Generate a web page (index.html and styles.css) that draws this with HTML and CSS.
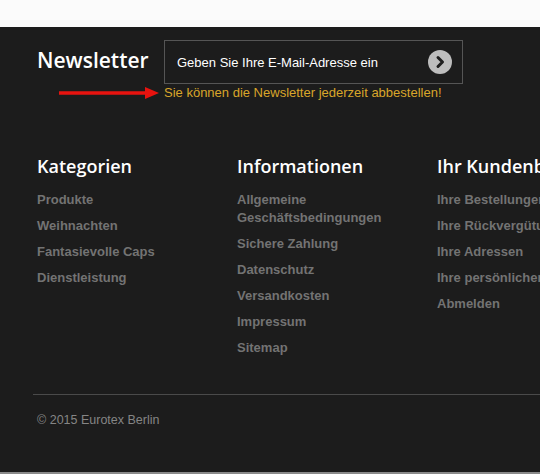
FILE: index.html
```html
<!DOCTYPE html>
<html lang="de">
<head>
<meta charset="utf-8">
<title>Footer</title>
<link rel="stylesheet" href="styles.css">
</head>
<body>
<div class="topband"></div>
<footer class="footer">
  <section class="newsletter">
    <h2 class="nl-title">Newsletter</h2>
    <div class="nl-form">
      <div class="nl-input">
        <span class="nl-placeholder">Geben Sie Ihre E-Mail-Adresse ein</span>
        <span class="nl-btn">
          <svg width="24" height="24" viewBox="0 0 24 24"><circle cx="12" cy="12" r="12" fill="#bdbdbd"/><path d="M10 7.5 L14.5 12 L10 16.5" fill="none" stroke="#1e1e1e" stroke-width="3" stroke-linecap="round" stroke-linejoin="round"/></svg>
        </span>
      </div>
      <p class="nl-note">Sie können die Newsletter jederzeit abbestellen!</p>
    </div>
    <svg class="annot-arrow" width="102" height="14" viewBox="0 0 102 14"><line x1="0" y1="7" x2="88" y2="7" stroke="#e8130f" stroke-width="3.5"/><polygon points="86,1 100,7 86,13" fill="#e8130f"/></svg>
  </section>

  <section class="columns">
    <div class="col">
      <h3 class="col-title">Kategorien</h3>
      <ul class="links">
        <li>Produkte</li>
        <li>Weihnachten</li>
        <li>Fantasievolle Caps</li>
        <li>Dienstleistung</li>
      </ul>
    </div>
    <div class="col">
      <h3 class="col-title">Informationen</h3>
      <ul class="links">
        <li>Allgemeine Geschäftsbedingungen</li>
        <li>Sichere Zahlung</li>
        <li>Datenschutz</li>
        <li>Versandkosten</li>
        <li>Impressum</li>
        <li>Sitemap</li>
      </ul>
    </div>
    <div class="col">
      <h3 class="col-title">Ihr Kundenbereich</h3>
      <ul class="links">
        <li>Ihre Bestellungen</li>
        <li>Ihre Rückvergütungen</li>
        <li>Ihre Adressen</li>
        <li>Ihre persönlichen Daten</li>
        <li>Abmelden</li>
      </ul>
    </div>
  </section>

  <div class="bottom">
    <p class="copy">© 2015 Eurotex Berlin</p>
  </div>
</footer>
<div class="bottomstrip"></div>
</body>
</html>
```

FILE: styles.css
```css
html, body {
  margin: 0;
  padding: 0;
  width: 540px;
  height: 474px;
  overflow: hidden;
  background: #1c1c1c;
  font-family: "Liberation Sans", Arial, sans-serif;
}
.topband {
  height: 27px;
  background: #fbfbfb;
}
.footer {
  height: 445px;
  background: #1c1c1c;
  padding-left: 37px;
  box-sizing: border-box;
  width: 720px;
}
.newsletter {
  position: relative;
  display: flex;
  align-items: flex-start;
  padding-top: 13px;
}
.nl-title {
  margin: 0;
  width: 127px;
  font-family: "Open Sans", sans-serif;
  font-weight: 600;
  font-size: 21px;
  line-height: 40px;
  color: #ffffff;
}
.nl-form {
  display: flex;
  flex-direction: column;
}
.nl-input {
  width: 299px;
  height: 44px;
  box-sizing: border-box;
  border: 1px solid #555555;
  display: flex;
  align-items: center;
  justify-content: space-between;
  padding: 0 10px 0 12px;
}
.nl-placeholder {
  color: #ffffff;
  font-size: 13px;
}
.nl-btn {
  display: flex;
}
.nl-note {
  margin: 2px 0 0;
  font-size: 13px;
  line-height: 14px;
  color: #d9a62a;
}
.annot-arrow {
  position: absolute;
  left: 22px;
  top: 59px;
}
.columns {
  display: grid;
  grid-template-columns: 200px 200px 200px;
  margin-top: 54px;
}
.col-title {
  margin: 0 0 13px;
  font-family: "Open Sans", sans-serif;
  font-weight: 600;
  font-size: 18px;
  line-height: 24px;
  color: #ffffff;
  white-space: nowrap;
}
.links {
  list-style: none;
  margin: 0;
  padding: 0;
  width: 170px;
  display: flex;
  flex-direction: column;
  gap: 8px;
}
.links li {
  font-size: 13px;
  font-weight: bold;
  line-height: 18px;
  color: #737373;
  white-space: normal;
}
.col:nth-child(3) .links li {
  white-space: nowrap;
}
.bottom {
  margin-top: 37px;
  margin-left: -4px;
  border-top: 1px solid #4a4a4a;
}
.copy {
  margin: 17px 0 0 4px;
  font-size: 12.5px;
  line-height: 16px;
  color: #858585;
}
.bottomstrip {
  height: 2px;
  background: #8a8a8a;
}
```
